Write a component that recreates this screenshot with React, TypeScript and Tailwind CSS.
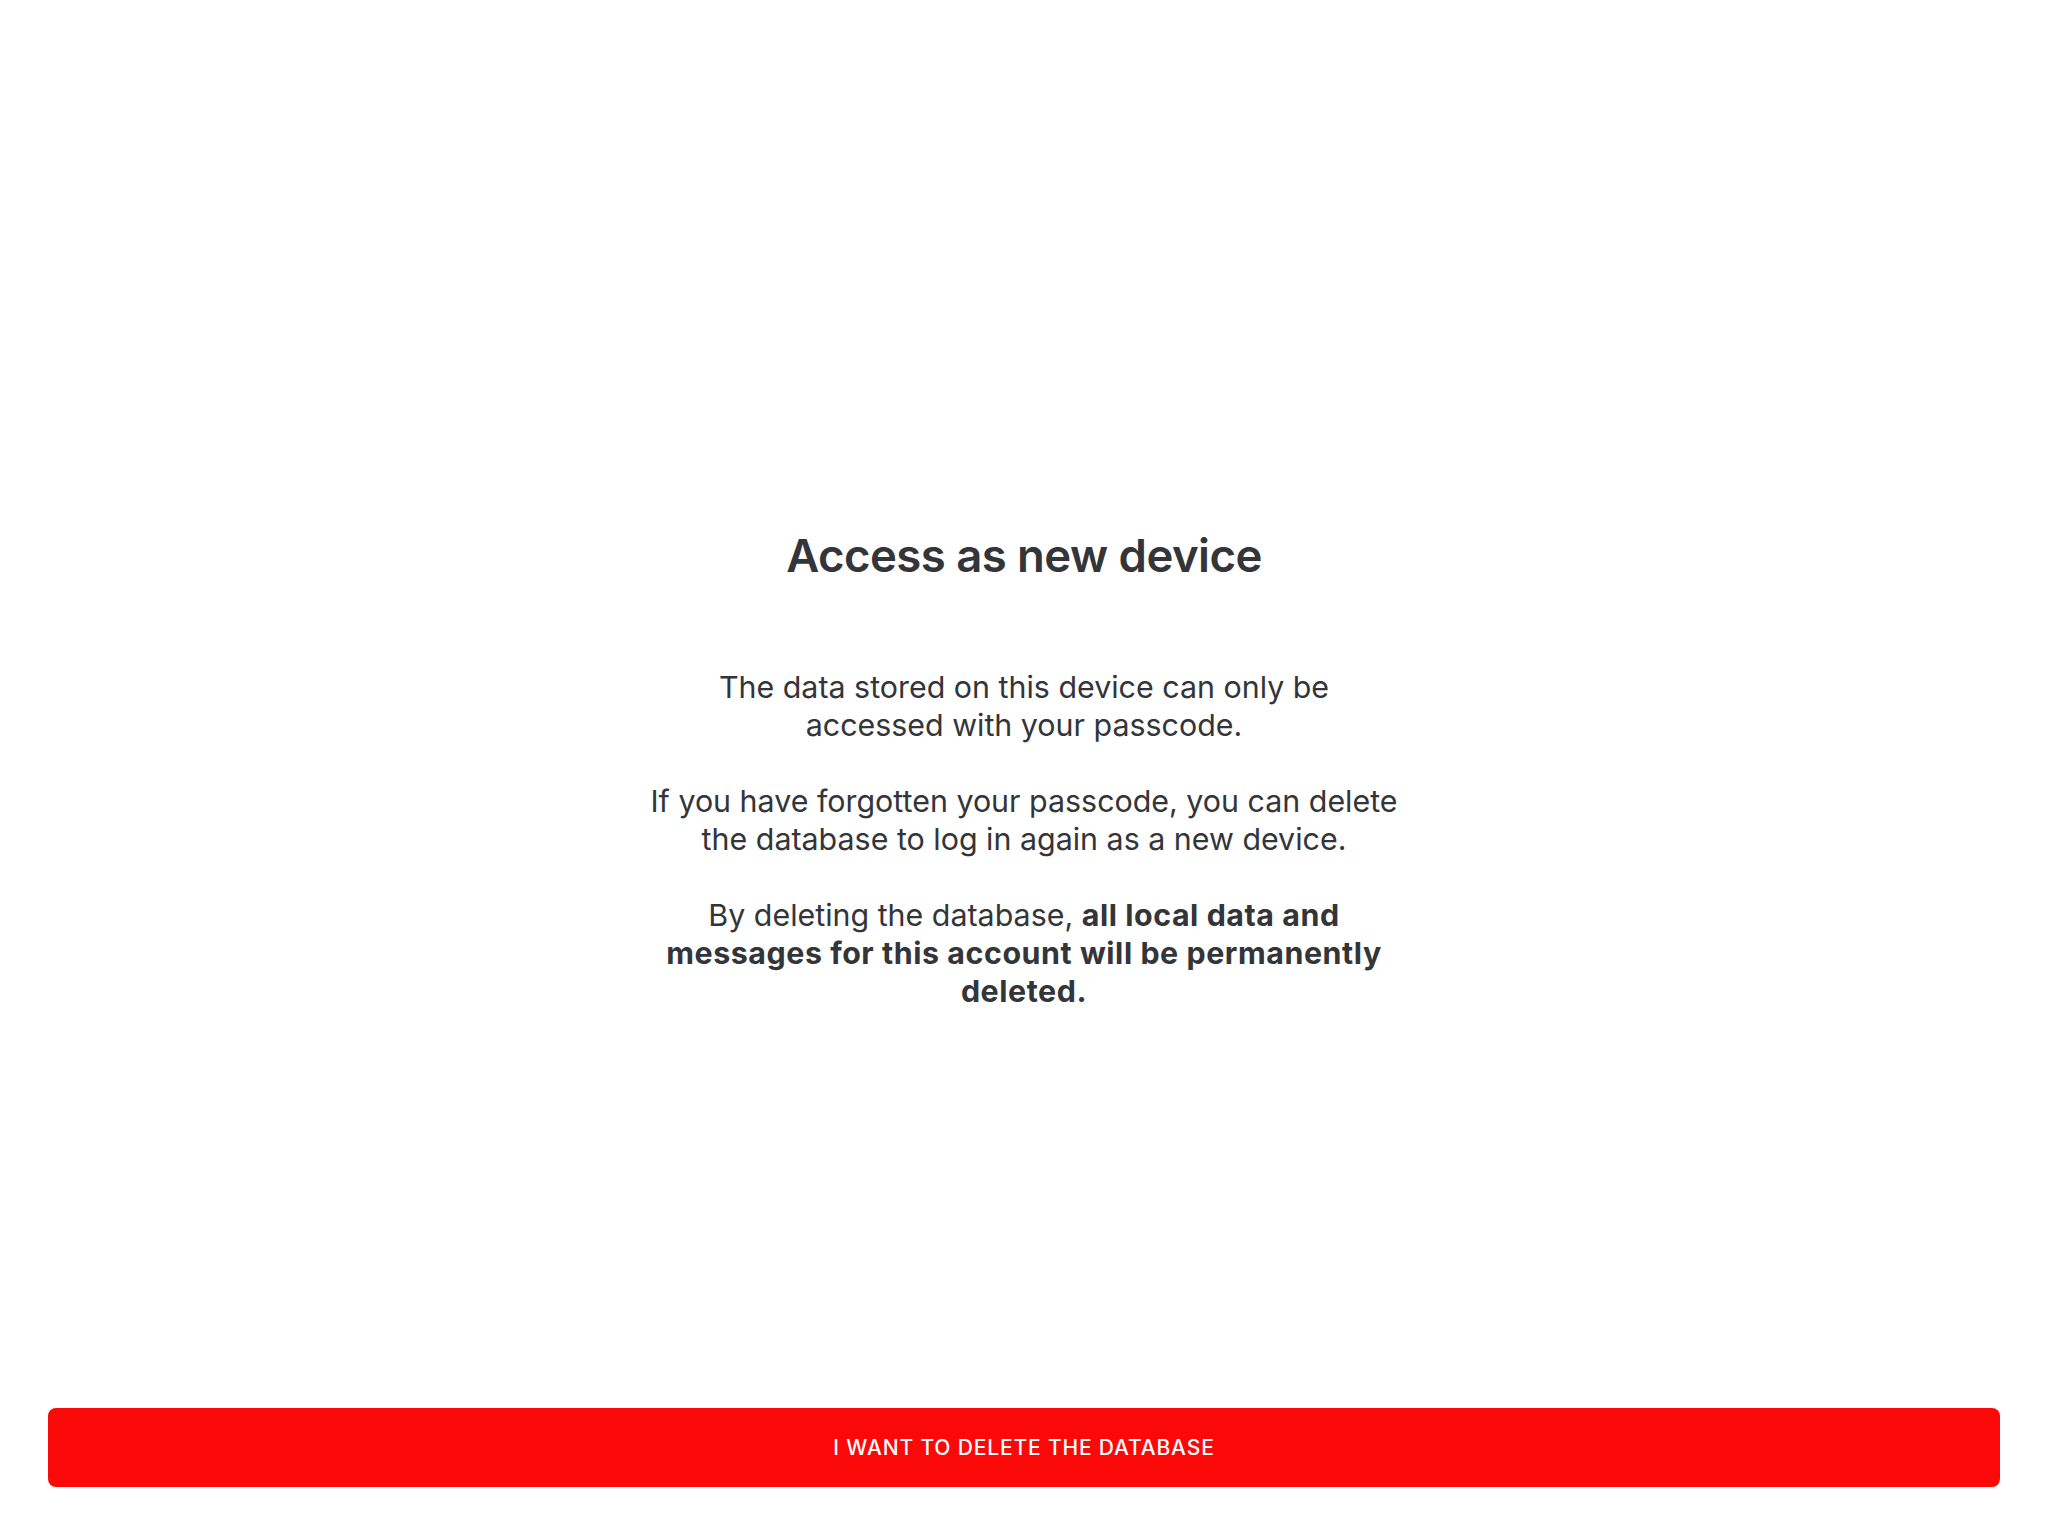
export default function App() {
  return (
    <div className="h-screen w-full bg-white flex flex-col font-['Inter','Noto_Sans',sans-serif] text-[#333539]">
      <div className="flex-1 flex flex-col items-center justify-center pt-[129px]">
        <h1 className="text-[45.5px] leading-[56px] font-semibold tracking-[-0.012em]">
          Access as new device
        </h1>
        <div className="mt-[84px] text-center text-[30.4px] leading-[38px]">
          <p>
            The data stored on this device can only be
            <br />
            accessed with your passcode.
          </p>
          <p className="mt-[38px]">
            If you have forgotten your passcode, you can delete
            <br />
            the database to log in again as a new device.
          </p>
          <p className="mt-[38px]">
            By deleting the database,{' '}
            <span className="font-bold tracking-[0.018em]">
              all local data and
              <br />
              messages for this account will be permanently
              <br />
              deleted.
            </span>
          </p>
        </div>
      </div>
      <div className="px-12 pb-[49px]">
        <button className="w-full h-[79px] rounded-lg bg-[#fb0909] text-white text-[21px] font-medium tracking-[0.04em] uppercase">
          I want to delete the database
        </button>
      </div>
    </div>
  )
}
